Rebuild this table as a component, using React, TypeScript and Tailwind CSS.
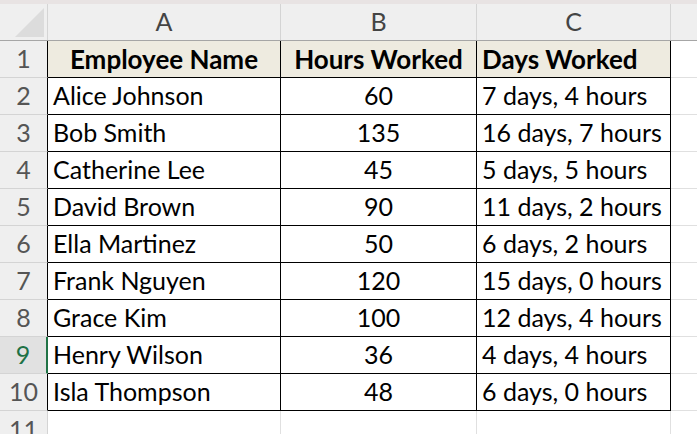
import React from "react";

const rows: [string, string, string][] = [
  ["Alice Johnson", "60", "7 days, 4 hours"],
  ["Bob Smith", "135", "16 days, 7 hours"],
  ["Catherine Lee", "45", "5 days, 5 hours"],
  ["David Brown", "90", "11 days, 2 hours"],
  ["Ella Martinez", "50", "6 days, 2 hours"],
  ["Frank Nguyen", "120", "15 days, 0 hours"],
  ["Grace Kim", "100", "12 days, 4 hours"],
  ["Henry Wilson", "36", "4 days, 4 hours"],
  ["Isla Thompson", "48", "6 days, 0 hours"],
];

export default function App() {
  const font = { fontFamily: "Lato, 'Liberation Sans', sans-serif" };
  return (
    <div className="w-[697px] h-[434px] overflow-hidden bg-white text-black" style={font}>
      <div className="h-[4px] bg-[#e8e3e3]" />
      {/* column header row */}
      <div className="flex h-[37px] bg-[#efefef] border-b border-[#a6a6a6] text-[25px] text-[#444]">
        <div className="w-[48px] shrink-0 border-r border-[#d4d4d4] relative">
          <div className="absolute left-[15px] top-[4px] w-0 h-0 border-l-[29px] border-l-transparent border-b-[29px] border-b-[#dcdcdc]" />
        </div>
        <div className="w-[233px] shrink-0 border-r border-[#d4d4d4] flex items-center justify-center">A</div>
        <div className="w-[196px] shrink-0 border-r border-[#d4d4d4] flex items-center justify-center">B</div>
        <div className="w-[194px] shrink-0 border-r border-[#d4d4d4] flex items-center justify-center">C</div>
        <div className="flex-1" />
      </div>
      {/* row 1 header */}
      <div className="flex h-[37px]">
        <div className="w-[48px] shrink-0 bg-[#efefef] border-r border-r-black border-b border-b-[#d4d4d4] flex items-center justify-center text-[25px] text-[#555]">1</div>
        <div className="w-[233px] shrink-0 bg-[#eeebe0] border-r border-b border-black flex items-center justify-center text-[26px] font-bold">Employee Name</div>
        <div className="w-[196px] shrink-0 bg-[#eeebe0] border-r border-b border-black flex items-center justify-center text-[26px] font-bold">Hours Worked</div>
        <div className="w-[194px] shrink-0 bg-[#eeebe0] border-r border-b border-black flex items-center pl-[5px] text-[26px] font-bold">Days Worked</div>
        <div className="flex-1 border-b border-[#e0e0e0]" />
      </div>
      {rows.map((r, i) => {
        const n = i + 2;
        const sel = n === 9;
        return (
          <div key={n} className="flex h-[37px]">
            <div
              className={
                sel
                  ? "w-[48px] shrink-0 bg-[#e1e1e1] border-r-2 border-r-[#217346] border-b border-b-[#d4d4d4] flex items-center justify-center text-[25px] text-[#1e7145]"
                  : "w-[48px] shrink-0 bg-[#efefef] border-r border-r-black border-b border-b-[#d4d4d4] flex items-center justify-center text-[25px] text-[#555]"
              }
            >
              {n}
            </div>
            <div className="w-[233px] shrink-0 border-r border-b border-black flex items-center pl-[5px] text-[25px]">{r[0]}</div>
            <div className="w-[196px] shrink-0 border-r border-b border-black flex items-center justify-center text-[25px]">{r[1]}</div>
            <div className="w-[194px] shrink-0 border-r border-b border-black flex items-center pl-[5px] text-[25px]">{r[2]}</div>
            <div className="flex-1 border-b border-[#e0e0e0]" />
          </div>
        );
      })}
      {/* row 11 */}
      <div className="flex h-[37px]">
        <div className="w-[48px] shrink-0 bg-[#efefef] border-r border-r-[#d4d4d4] flex items-start justify-center pt-0 text-[25px] text-[#555]">11</div>
        <div className="w-[233px] shrink-0 border-r border-[#e0e0e0]" />
        <div className="w-[196px] shrink-0 border-r border-[#e0e0e0]" />
        <div className="w-[194px] shrink-0 border-r border-[#e0e0e0]" />
        <div className="flex-1" />
      </div>
    </div>
  );
}
